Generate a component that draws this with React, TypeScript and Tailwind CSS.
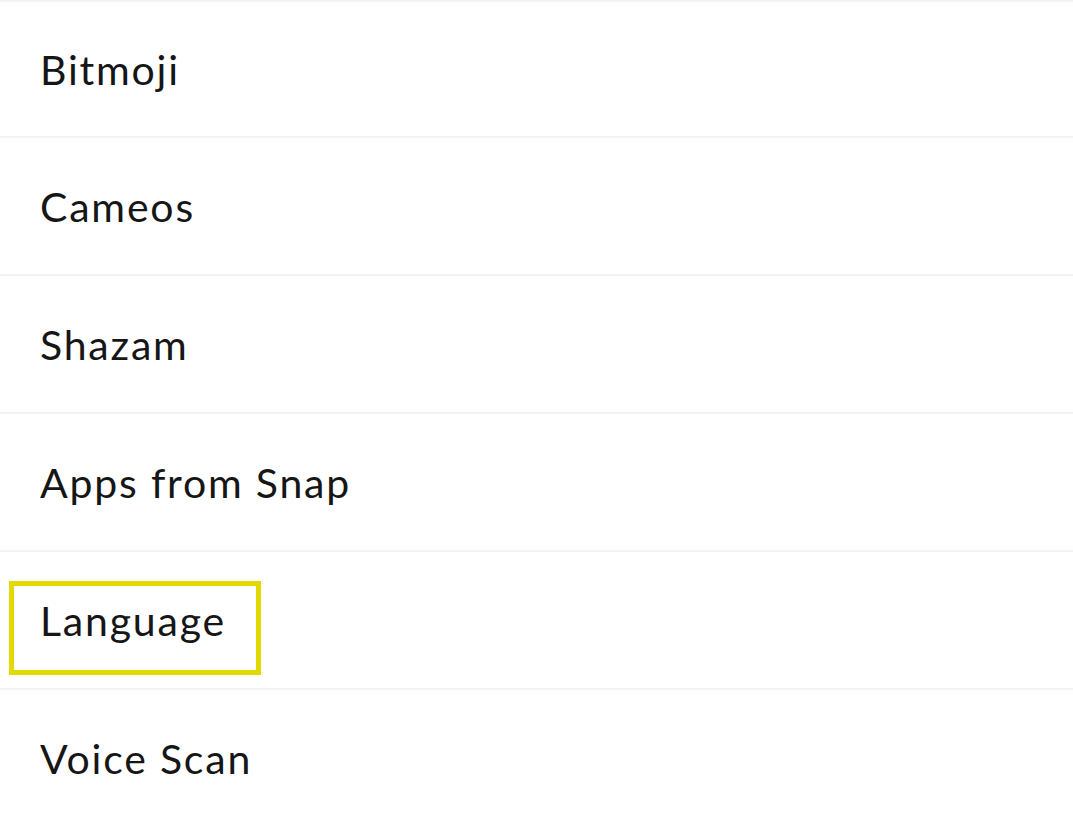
const items = ["Bitmoji", "Cameos", "Shazam", "Apps from Snap", "Language", "Voice Scan"];

export default function App() {
  return (
    <div
      className="w-[1073px] h-[825px] overflow-hidden bg-white text-[#161616]"
      style={{ fontFamily: "Lato, 'Noto Sans', sans-serif" }}
    >
      {items.map((label, i) => (
        <div
          key={label}
          className={
            i === 0
              ? "h-[138px] flex items-center pl-[40px] border-t-2 border-b-2 border-[#f3f3f3]"
              : "h-[138px] flex items-center pl-[40px] border-b-2 border-[#f3f3f3]"
          }
        >
          <span className="relative text-[41px] leading-none tracking-[1.8px]">
            {label}
            {label === "Language" && (
              <span className="absolute left-[-31px] right-[-35px] top-[-19px] bottom-[-34px] border-[5px] border-[#e2d900]" />
            )}
          </span>
        </div>
      ))}
    </div>
  );
}
